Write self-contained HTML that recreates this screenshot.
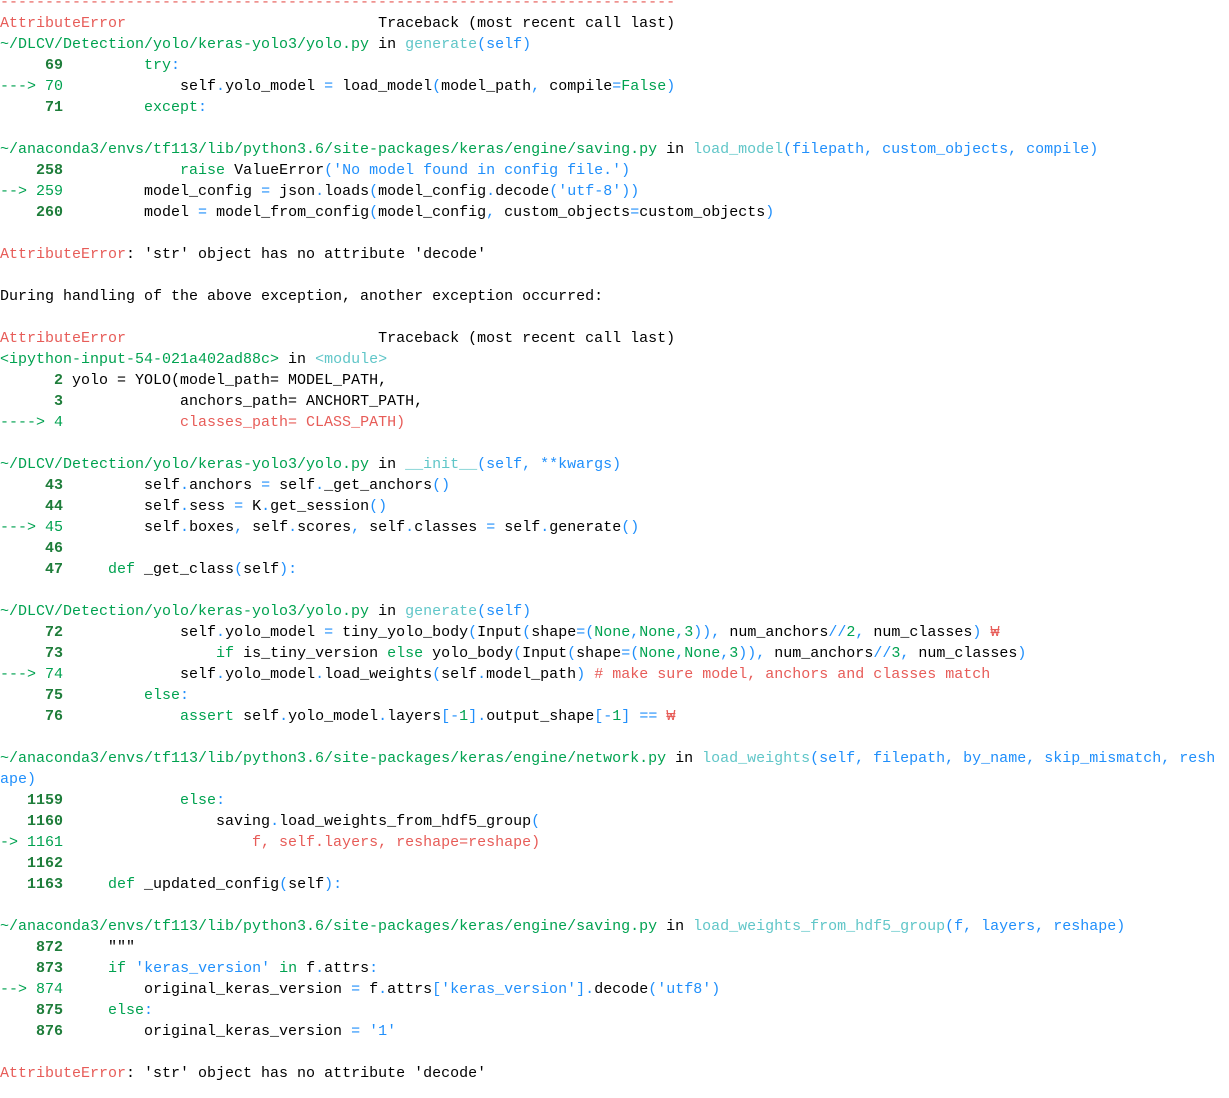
<!DOCTYPE html>
<html><head><meta charset="utf-8"><style>
html,body{margin:0;padding:0;background:#fff;width:1229px;height:1098px;overflow:hidden}
pre{position:absolute;left:0;top:-8px;margin:0;font-family:"Liberation Mono","NanumGothic",monospace;font-size:15px;line-height:21px;color:#000;white-space:pre}
.r{color:#e75c58}.g{color:#00a250}.c{color:#60c6c8}.b{color:#208ffb}.n{color:#1e7d3a;font-weight:bold}
</style></head><body><pre><span class="r">---------------------------------------------------------------------------</span>
<span class="r">AttributeError</span>                            Traceback (most recent call last)
<span class="g">~/DLCV/Detection/yolo/keras-yolo3/yolo.py</span> in <span class="c">generate</span><span class="b">(self)</span>
<span class="n">     69</span>         <span class="g">try</span><span class="b">:</span>
<span class="g">---&gt; 70</span>             self<span class="b">.</span>yolo_model <span class="b">=</span> load_model<span class="b">(</span>model_path<span class="b">,</span> compile<span class="b">=</span><span class="g">False</span><span class="b">)</span>
<span class="n">     71</span>         <span class="g">except</span><span class="b">:</span>

<span class="g">~/anaconda3/envs/tf113/lib/python3.6/site-packages/keras/engine/saving.py</span> in <span class="c">load_model</span><span class="b">(filepath, custom_objects, compile)</span>
<span class="n">    258</span>             <span class="g">raise</span> ValueError<span class="b">(</span><span class="b">'No model found in config file.'</span><span class="b">)</span>
<span class="g">--&gt; 259</span>         model_config <span class="b">=</span> json<span class="b">.</span>loads<span class="b">(</span>model_config<span class="b">.</span>decode<span class="b">(</span><span class="b">'utf-8'</span><span class="b">))</span>
<span class="n">    260</span>         model <span class="b">=</span> model_from_config<span class="b">(</span>model_config<span class="b">,</span> custom_objects<span class="b">=</span>custom_objects<span class="b">)</span>

<span class="r">AttributeError</span>: 'str' object has no attribute 'decode'

During handling of the above exception, another exception occurred:

<span class="r">AttributeError</span>                            Traceback (most recent call last)
<span class="g">&lt;ipython-input-54-021a402ad88c&gt;</span> in <span class="c">&lt;module&gt;</span>
<span class="n">      2</span> yolo = YOLO(model_path= MODEL_PATH,
<span class="n">      3</span>             anchors_path= ANCHORT_PATH,
<span class="g">----&gt; 4</span><span class="r">             classes_path= CLASS_PATH)</span>

<span class="g">~/DLCV/Detection/yolo/keras-yolo3/yolo.py</span> in <span class="c">__init__</span><span class="b">(self, **kwargs)</span>
<span class="n">     43</span>         self<span class="b">.</span>anchors <span class="b">=</span> self<span class="b">.</span>_get_anchors<span class="b">()</span>
<span class="n">     44</span>         self<span class="b">.</span>sess <span class="b">=</span> K<span class="b">.</span>get_session<span class="b">()</span>
<span class="g">---&gt; 45</span>         self<span class="b">.</span>boxes<span class="b">,</span> self<span class="b">.</span>scores<span class="b">,</span> self<span class="b">.</span>classes <span class="b">=</span> self<span class="b">.</span>generate<span class="b">()</span>
<span class="n">     46</span> 
<span class="n">     47</span>     <span class="g">def</span> _get_class<span class="b">(</span>self<span class="b">):</span>

<span class="g">~/DLCV/Detection/yolo/keras-yolo3/yolo.py</span> in <span class="c">generate</span><span class="b">(self)</span>
<span class="n">     72</span>             self<span class="b">.</span>yolo_model <span class="b">=</span> tiny_yolo_body<span class="b">(</span>Input<span class="b">(</span>shape<span class="b">=(</span><span class="g">None</span><span class="b">,</span><span class="g">None</span><span class="b">,</span><span class="g">3</span><span class="b">)),</span> num_anchors<span class="b">//</span><span class="g">2</span><span class="b">,</span> num_classes<span class="b">)</span> <span class="r">₩</span>
<span class="n">     73</span>                 <span class="g">if</span> is_tiny_version <span class="g">else</span> yolo_body<span class="b">(</span>Input<span class="b">(</span>shape<span class="b">=(</span><span class="g">None</span><span class="b">,</span><span class="g">None</span><span class="b">,</span><span class="g">3</span><span class="b">)),</span> num_anchors<span class="b">//</span><span class="g">3</span><span class="b">,</span> num_classes<span class="b">)</span>
<span class="g">---&gt; 74</span>             self<span class="b">.</span>yolo_model<span class="b">.</span>load_weights<span class="b">(</span>self<span class="b">.</span>model_path<span class="b">)</span> <span class="r"># make sure model, anchors and classes match</span>
<span class="n">     75</span>         <span class="g">else</span><span class="b">:</span>
<span class="n">     76</span>             <span class="g">assert</span> self<span class="b">.</span>yolo_model<span class="b">.</span>layers<span class="b">[</span><span class="b">-</span><span class="g">1</span><span class="b">].</span>output_shape<span class="b">[</span><span class="b">-</span><span class="g">1</span><span class="b">]</span> <span class="b">==</span> <span class="r">₩</span>

<span class="g">~/anaconda3/envs/tf113/lib/python3.6/site-packages/keras/engine/network.py</span> in <span class="c">load_weights</span><span class="b">(self, filepath, by_name, skip_mismatch, resh</span>
<span class="b">ape)</span>
<span class="n">   1159</span>             <span class="g">else</span><span class="b">:</span>
<span class="n">   1160</span>                 saving<span class="b">.</span>load_weights_from_hdf5_group<span class="b">(</span>
<span class="g">-&gt; 1161</span><span class="r">                     f, self.layers, reshape=reshape)</span>
<span class="n">   1162</span> 
<span class="n">   1163</span>     <span class="g">def</span> _updated_config<span class="b">(</span>self<span class="b">):</span>

<span class="g">~/anaconda3/envs/tf113/lib/python3.6/site-packages/keras/engine/saving.py</span> in <span class="c">load_weights_from_hdf5_group</span><span class="b">(f, layers, reshape)</span>
<span class="n">    872</span>     """
<span class="n">    873</span>     <span class="g">if</span> <span class="b">'keras_version'</span> <span class="g">in</span> f<span class="b">.</span>attrs<span class="b">:</span>
<span class="g">--&gt; 874</span>         original_keras_version <span class="b">=</span> f<span class="b">.</span>attrs<span class="b">[</span><span class="b">'keras_version'</span><span class="b">].</span>decode<span class="b">(</span><span class="b">'utf8'</span><span class="b">)</span>
<span class="n">    875</span>     <span class="g">else</span><span class="b">:</span>
<span class="n">    876</span>         original_keras_version <span class="b">=</span> <span class="b">'1'</span>

<span class="r">AttributeError</span>: 'str' object has no attribute 'decode'
</pre></body></html>
